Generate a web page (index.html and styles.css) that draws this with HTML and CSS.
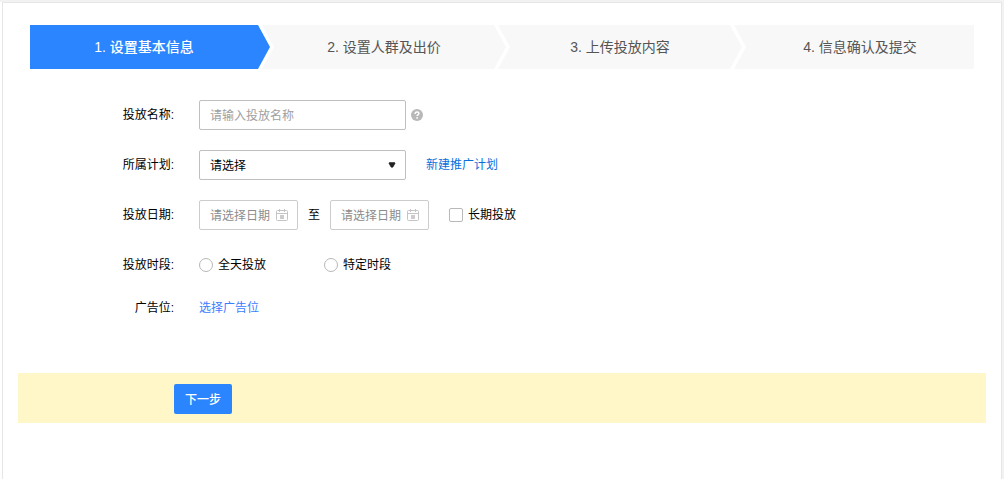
FILE: index.html
```html
<!DOCTYPE html>
<html lang="zh-CN">
<head>
    <meta charset="UTF-8">
    <meta name="viewport" content="width=device-width, initial-scale=1.0">
    <title>新建投放</title>
    <link rel="stylesheet" href="styles.css">
</head>

<body>
<div class="panel">
    <!-- 步骤条 -->
    <ol class="steps">
        <li class="step active">1. 设置基本信息</li>
        <li class="step">2. 设置人群及出价</li>
        <li class="step">3. 上传投放内容</li>
        <li class="step">4. 信息确认及提交</li>
    </ol>

    <form>
        <!-- 基本信息 -->
        <div class="fields">
            <div class="row">
                <label class="label" for="name">投放名称:</label>
                <input class="control wide" type="text" id="name" placeholder="请输入投放名称">
                <svg class="help" viewBox="0 0 12 12" aria-hidden="true">
                    <circle cx="6" cy="6" r="6" fill="#b8b8b8"/>
                    <path d="M4.1 4.9C4.1 3.6 4.9 3 6 3s1.9.6 1.9 1.6c0 1.3-1.8 1.3-1.8 2.5" fill="none" stroke="#fff" stroke-width="1.4"/>
                    <circle cx="6.1" cy="8.9" r=".9" fill="#fff"/>
                </svg>
            </div>

            <div class="row">
                <label class="label" for="plan">所属计划:</label>
                <div class="select wide">
                    <select class="control" id="plan">
                        <option>请选择</option>
                    </select>
                    <svg class="arrow" viewBox="0 0 8 6" aria-hidden="true">
                        <path d="M1.3.6h5.4l.3.8-2.2 3.8H3.2L1 1.4z" fill="#222" stroke="#222" stroke-width=".6" stroke-linejoin="round"/>
                    </svg>
                </div>
                <a class="new-plan" href="#">新建推广计划</a>
            </div>

            <div class="row">
                <label class="label" for="startDate">投放日期:</label>
                <div class="date">
                    <input class="control" type="text" id="startDate" placeholder="请选择日期">
                    <svg class="calendar" viewBox="0 0 12 12" aria-hidden="true">
                        <rect x=".5" y="1.5" width="11" height="10" rx="1" fill="none" stroke="#c4c4c4"/>
                        <path d="M.5 4.5h11M3.5 0v3M8.5 0v3" fill="none" stroke="#c4c4c4"/>
                        <path d="M4 6h4v4H4z" fill="#ccc"/>
                    </svg>
                </div>
                <label class="to" for="endDate">至</label>
                <div class="date">
                    <input class="control" type="text" id="endDate" placeholder="请选择日期">
                    <svg class="calendar" viewBox="0 0 12 12" aria-hidden="true">
                        <rect x=".5" y="1.5" width="11" height="10" rx="1" fill="none" stroke="#c4c4c4"/>
                        <path d="M.5 4.5h11M3.5 0v3M8.5 0v3" fill="none" stroke="#c4c4c4"/>
                        <path d="M4 6h4v4H4z" fill="#ccc"/>
                    </svg>
                </div>
                <label class="option long-term"><input class="tick" type="checkbox">长期投放</label>
            </div>

            <div class="row" role="radiogroup" aria-labelledby="periodLabel">
                <span class="label" id="periodLabel">投放时段:</span>
                <label class="option period"><input class="tick round" type="radio" name="period">全天投放</label>
                <label class="option period"><input class="tick round" type="radio" name="period">特定时段</label>
            </div>

            <div class="row short">
                <span class="label">广告位:</span>
                <a class="pick" href="#">选择广告位</a>
            </div>
        </div>

        <!-- 底部操作栏 -->
        <div class="actions">
            <button class="next" type="button">下一步</button>
        </div>
    </form>
</div>
</body>
</html>
```
FILE: styles.css
```css
* {
    box-sizing: border-box;
    margin: 0;
    padding: 0;
}

body {
    font-family: "Liberation Sans", "Noto Sans CJK SC", sans-serif;
    font-size: 12px;
    line-height: 16px;
    color: #000;
    background: #fff;
    display: flex;
    min-height: 100vh;
    padding-left: 2px;
    border-top: 2px solid #f2f2f2;
    border-right: 2px solid #f2f2f2;
}

.panel {
    flex: 1;
    background: #fff;
    border: 1px solid #e6e6e6;
    border-bottom: none;
    padding: 22px 15px 56px;
}

a {
    text-decoration: none;
}

/* 步骤条 */
.steps {
    display: grid;
    grid-template-columns: repeat(4, 1fr);
    margin: 0 12px;
    list-style: none;
}

.step {
    height: 44px;
    line-height: 44px;
    margin: 0 -4px;
    text-align: center;
    font-size: 14px;
    color: #555;
    background: #f8f8f8;
    clip-path: polygon(0 0, calc(100% - 12px) 0, 100% 50%, calc(100% - 12px) 100%, 0 100%, 12px 50%);
}

.step:first-child {
    margin-left: 0;
    padding-right: 12px;
    clip-path: polygon(0 0, calc(100% - 12px) 0, 100% 50%, calc(100% - 12px) 100%, 0 100%);
}

.step:last-child {
    margin-right: 0;
    padding-left: 12px;
    clip-path: polygon(0 0, 100% 0, 100% 100%, 0 100%, 12px 50%);
}

.step.active {
    color: #fff;
    font-weight: 500;
    background: #2b85ff;
}

/* 表单 */
.fields {
    display: flex;
    flex-direction: column;
    gap: 20px;
    padding: 31px 12px 57px;
}

.row {
    display: flex;
    align-items: center;
    min-height: 30px;
}

.row.short {
    min-height: 16px;
}

.label {
    width: 144px;
    margin-right: 25px;
    text-align: right;
}

.control {
    width: 100%;
    height: 30px;
    padding: 1px 10px 0;
    border: 1px solid #bfbfbf;
    border-radius: 2px;
    font: inherit;
    color: #000;
    background: #fff;
    appearance: none;
}

.control::placeholder {
    color: #a0a0a0;
}

.wide {
    width: 207px;
}

.help {
    width: 12px;
    height: 12px;
    margin-left: 5px;
}

.select,
.date {
    position: relative;
}

.arrow {
    position: absolute;
    top: 12px;
    right: 10px;
    width: 8px;
    height: 6px;
    pointer-events: none;
}

.new-plan {
    margin-left: 20px;
    color: #0a6fdc;
}

.date {
    width: 99px;
}

.date .control {
    padding-right: 24px;
    border-color: #ccc;
}

.date .control::placeholder {
    color: #8c8c8c;
}

.calendar {
    position: absolute;
    top: 9px;
    right: 10px;
    width: 12px;
    height: 12px;
    pointer-events: none;
}

.to {
    margin: 0 10px;
}

.option {
    display: flex;
    align-items: center;
    gap: 5px;
}

.long-term {
    margin-left: 20px;
}

.period {
    width: 125px;
}

.tick {
    width: 14px;
    height: 14px;
    border: 1px solid #b8b8b8;
    border-radius: 2px;
    background: #fff;
    appearance: none;
}

.tick.round {
    border-radius: 50%;
}

.tick:checked {
    border: 4px solid #2b85ff;
}

.pick {
    color: #3b7cff;
}

/* 底部操作栏 */
.actions {
    display: flex;
    padding: 11px 12px 9px 156px;
    background: #fff7c8;
}

.next {
    height: 30px;
    padding: 1px 11px 0;
    border: none;
    border-radius: 2px;
    font: inherit;
    font-weight: 500;
    color: #fff;
    background: #2b85ff;
    cursor: pointer;
}
```
